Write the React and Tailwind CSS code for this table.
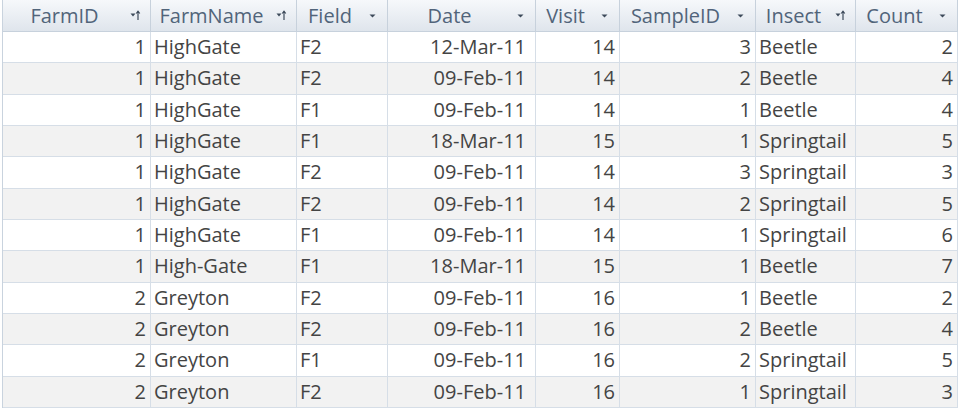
import React from "react";

const cols = [
  { name: "FarmID", w: 148, align: "right", icon: "sort" },
  { name: "FarmName", w: 146, align: "left", icon: "sort" },
  { name: "Field", w: 91, align: "left", icon: "drop" },
  { name: "Date", w: 148, align: "date", icon: "drop" },
  { name: "Visit", w: 84, align: "right", icon: "drop" },
  { name: "SampleID", w: 136, align: "right", icon: "drop" },
  { name: "Insect", w: 100, align: "left", icon: "sort" },
  { name: "Count", w: 102, align: "right", icon: "drop" },
];

const rows = [
  [1, "HighGate", "F2", "12-Mar-11", 14, 3, "Beetle", 2],
  [1, "HighGate", "F2", "09-Feb-11", 14, 2, "Beetle", 4],
  [1, "HighGate", "F1", "09-Feb-11", 14, 1, "Beetle", 4],
  [1, "HighGate", "F1", "18-Mar-11", 15, 1, "Springtail", 5],
  [1, "HighGate", "F2", "09-Feb-11", 14, 3, "Springtail", 3],
  [1, "HighGate", "F2", "09-Feb-11", 14, 2, "Springtail", 5],
  [1, "HighGate", "F1", "09-Feb-11", 14, 1, "Springtail", 6],
  [1, "High-Gate", "F1", "18-Mar-11", 15, 1, "Beetle", 7],
  [2, "Greyton", "F2", "09-Feb-11", 16, 1, "Beetle", 2],
  [2, "Greyton", "F2", "09-Feb-11", 16, 2, "Beetle", 4],
  [2, "Greyton", "F1", "09-Feb-11", 16, 2, "Springtail", 5],
  [2, "Greyton", "F2", "09-Feb-11", 16, 1, "Springtail", 3],
];

const alignClass = {
  left: "justify-start pl-[3px]",
  right: "justify-end pr-[4px]",
  date: "justify-end pr-[9px]",
};

function DropIcon() {
  return (
    <svg width="9" height="6" viewBox="0 0 9 6">
      <path d="M1.5 1.5 H7.5 L4.5 4.5 Z" fill="#3d4a5a" />
    </svg>
  );
}

function SortIcon() {
  return (
    <svg width="11" height="11" viewBox="0 0 11 11">
      <path d="M0.5 3.5 H5.5 L3 6.5 Z" fill="#3d4a5a" />
      <path d="M8 1.5 V10" stroke="#3d4a5a" strokeWidth="1.2" />
      <path d="M6.2 3.5 L8 1.2 L9.8 3.5" stroke="#3d4a5a" strokeWidth="1.1" fill="none" />
    </svg>
  );
}

export default function App() {
  return (
    <div
      className="w-[960px] h-[410px] overflow-hidden bg-white"
      style={{ fontFamily: "'Open Sans', Lato, sans-serif" }}
    >
      <div className="flex w-[955px] ml-[2px] border-l border-[#c9d3de]">
        {cols.map((c) => (
          <div
            key={c.name}
            style={{ width: c.w }}
            className="h-[32px] shrink-0 flex items-center border-r border-b border-[#c7d1dc] bg-gradient-to-b from-[#f6f8fb] to-[#dfe5ec] text-[#51647a] text-[20px] leading-none"
          >
            <div className="flex-1 text-center pl-[6px] whitespace-nowrap">{c.name}</div>
            <div className="w-[30px] flex justify-center items-center">
              {c.icon === "sort" ? <SortIcon /> : <DropIcon />}
            </div>
          </div>
        ))}
      </div>
      {rows.map((r, ri) => (
        <div
          key={ri}
          className={`flex w-[955px] ml-[2px] border-l border-[#c9d3de] ${ri % 2 === 1 ? "bg-[#f2f2f2]" : "bg-white"}`}
        >
          {r.map((v, ci) => (
            <div
              key={ci}
              style={{ width: cols[ci].w }}
              className={`h-[31.33px] shrink-0 flex items-center border-r border-b border-[#d6dee7] text-[20px] leading-none text-[#444444] whitespace-nowrap ${alignClass[cols[ci].align]}`}
            >
              {v}
            </div>
          ))}
        </div>
      ))}
    </div>
  );
}
